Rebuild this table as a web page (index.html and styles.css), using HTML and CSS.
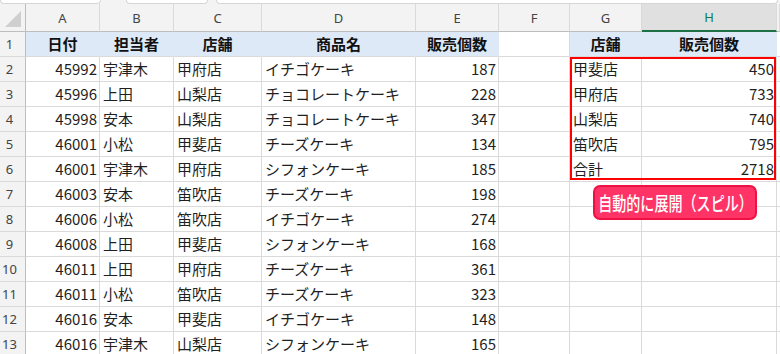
FILE: index.html
```html
<!DOCTYPE html>
<html lang="ja">
<head>
<meta charset="utf-8">
<link rel="stylesheet" href="styles.css">
</head>
<body>
<div class="sheet">
  <div class="topstrip">
    <div class="tbox tb1"></div>
    <div class="tbox tb2"></div>
    <div class="tbox tb3"></div>
  </div>
  <div class="row colhead">
    <div class="corner"><svg width="17" height="17" viewBox="0 0 17 17"><polygon points="16,0 16,16 0,16" fill="#cfcfcf"/></svg></div>
    <div class="ch">A</div><div class="ch">B</div><div class="ch">C</div><div class="ch">D</div><div class="ch">E</div><div class="ch">F</div><div class="ch">G</div><div class="ch sel">H</div><div class="ch"></div>
  </div>
  <div class="row">
    <div class="rh">1</div>
    <div class="c hd">日付</div><div class="c hd">担当者</div><div class="c hd">店舗</div><div class="c hd">商品名</div><div class="c hd">販売個数</div><div class="c"></div><div class="c hd">店舗</div><div class="c hd">販売個数</div><div class="c"></div>
  </div>
  <div class="row">
    <div class="rh">2</div>
    <div class="c num">45992</div><div class="c">宇津木</div><div class="c">甲府店</div><div class="c">イチゴケーキ</div><div class="c num">187</div><div class="c"></div><div class="c">甲斐店</div><div class="c num">450</div><div class="c"></div>
  </div>
  <div class="row">
    <div class="rh">3</div>
    <div class="c num">45996</div><div class="c">上田</div><div class="c">山梨店</div><div class="c">チョコレートケーキ</div><div class="c num">228</div><div class="c"></div><div class="c">甲府店</div><div class="c num">733</div><div class="c"></div>
  </div>
  <div class="row">
    <div class="rh">4</div>
    <div class="c num">45998</div><div class="c">安本</div><div class="c">山梨店</div><div class="c">チョコレートケーキ</div><div class="c num">347</div><div class="c"></div><div class="c">山梨店</div><div class="c num">740</div><div class="c"></div>
  </div>
  <div class="row">
    <div class="rh">5</div>
    <div class="c num">46001</div><div class="c">小松</div><div class="c">甲斐店</div><div class="c">チーズケーキ</div><div class="c num">134</div><div class="c"></div><div class="c">笛吹店</div><div class="c num">795</div><div class="c"></div>
  </div>
  <div class="row">
    <div class="rh">6</div>
    <div class="c num">46001</div><div class="c">宇津木</div><div class="c">甲府店</div><div class="c">シフォンケーキ</div><div class="c num">185</div><div class="c"></div><div class="c">合計</div><div class="c num">2718</div><div class="c"></div>
  </div>
  <div class="row">
    <div class="rh">7</div>
    <div class="c num">46003</div><div class="c">安本</div><div class="c">笛吹店</div><div class="c">チーズケーキ</div><div class="c num">198</div><div class="c"></div><div class="c"></div><div class="c"></div><div class="c"></div>
  </div>
  <div class="row">
    <div class="rh">8</div>
    <div class="c num">46006</div><div class="c">小松</div><div class="c">笛吹店</div><div class="c">イチゴケーキ</div><div class="c num">274</div><div class="c"></div><div class="c"></div><div class="c"></div><div class="c"></div>
  </div>
  <div class="row">
    <div class="rh">9</div>
    <div class="c num">46008</div><div class="c">上田</div><div class="c">甲斐店</div><div class="c">シフォンケーキ</div><div class="c num">168</div><div class="c"></div><div class="c"></div><div class="c"></div><div class="c"></div>
  </div>
  <div class="row">
    <div class="rh">10</div>
    <div class="c num">46011</div><div class="c">上田</div><div class="c">甲府店</div><div class="c">チーズケーキ</div><div class="c num">361</div><div class="c"></div><div class="c"></div><div class="c"></div><div class="c"></div>
  </div>
  <div class="row">
    <div class="rh">11</div>
    <div class="c num">46011</div><div class="c">小松</div><div class="c">笛吹店</div><div class="c">チーズケーキ</div><div class="c num">323</div><div class="c"></div><div class="c"></div><div class="c"></div><div class="c"></div>
  </div>
  <div class="row">
    <div class="rh">12</div>
    <div class="c num">46016</div><div class="c">安本</div><div class="c">甲斐店</div><div class="c">イチゴケーキ</div><div class="c num">148</div><div class="c"></div><div class="c"></div><div class="c"></div><div class="c"></div>
  </div>
  <div class="row">
    <div class="rh">13</div>
    <div class="c num">46016</div><div class="c">宇津木</div><div class="c">山梨店</div><div class="c">シフォンケーキ</div><div class="c num">165</div><div class="c"></div><div class="c"></div><div class="c"></div><div class="c"></div>
  </div>

  <div class="spillbox"></div>
  <div class="callout"><span class="callout-text">自動的に展開（スピル）</span></div>
</div>
</body>
</html>
```

FILE: styles.css
```css
html, body {
  margin: 0;
  padding: 0;
  background: #ffffff;
}
.sheet {
  position: relative;
  width: 780px;
  height: 354px;
  overflow: hidden;
  font-family: "Noto Sans CJK JP", "Noto Sans", sans-serif;
  color: #1f1f1f;
}
.topstrip {
  height: 4px;
  background: #f3f3f3;
  display: flex;
}
.tbox {
  height: 3px;
  background: #ffffff;
  border: 1px solid #d6d6d6;
  border-top: none;
  border-radius: 0 0 5px 5px;
}
.tb1 { width: 99px; }
.tb2 { width: 80px; margin-left: 25px; }
.tb3 { width: 560px; margin-left: 8px; }
.row {
  display: grid;
  grid-template-columns: 26px 74px 74px 88px 154px 83px 71px 72px 135px 3px;
  height: 25px;
}
.colhead {
  height: 28px;
  background: #f3f3f3;
}
.corner {
  box-sizing: border-box;
  border-right: 1px solid #bdbdbd;
  border-bottom: 1px solid #bdbdbd;
  display: flex;
  align-items: flex-end;
  justify-content: flex-end;
  padding: 0 3px 3px 0;
}
.ch {
  box-sizing: border-box;
  border-right: 1px solid #dadada;
  border-bottom: 1px solid #bdbdbd;
  font-family: "Noto Sans", "Liberation Sans", sans-serif;
  font-size: 13px;
  color: #444;
  display: flex;
  align-items: center;
  justify-content: center;
}
.ch.sel {
  background: #e0e0e0;
  color: #107c41;
  border-bottom: 2px solid #1e7145;
}
.rh {
  box-sizing: border-box;
  background: #f3f3f3;
  border-right: 1px solid #bdbdbd;
  border-bottom: 1px solid #dadada;
  font-family: "Noto Sans", "Liberation Sans", sans-serif;
  font-size: 13px;
  color: #444;
  display: flex;
  align-items: center;
  justify-content: center;
  padding-right: 6px;
}
.c {
  box-sizing: border-box;
  border-right: 1px solid #dadada;
  border-bottom: 1px solid #dadada;
  font-size: 15px;
  line-height: 24px;
  padding: 0 3px;
  white-space: nowrap;
  overflow: hidden;
}
.num {
  text-align: right;
  padding-right: 2px;
}
.hd {
  background: #dde9f6;
  border-right-color: #dde9f6;
  font-weight: bold;
  text-align: center;
  color: #111;
}
.spillbox {
  position: absolute;
  left: 570px;
  top: 57px;
  width: 206px;
  height: 123px;
  box-sizing: border-box;
  border: 2px solid #ff0000;
}
.callout {
  position: absolute;
  left: 593px;
  top: 185px;
  width: 164px;
  height: 35px;
  box-sizing: border-box;
  background: #ff3366;
  border: 2px solid #ee1144;
  border-radius: 7px;
  display: flex;
  align-items: center;
  justify-content: center;
  overflow: hidden;
}
.callout-text {
  display: inline-block;
  color: #ffffff;
  font-size: 19px;
  font-weight: 500;
  white-space: nowrap;
  transform: scaleX(0.74);
}
```
